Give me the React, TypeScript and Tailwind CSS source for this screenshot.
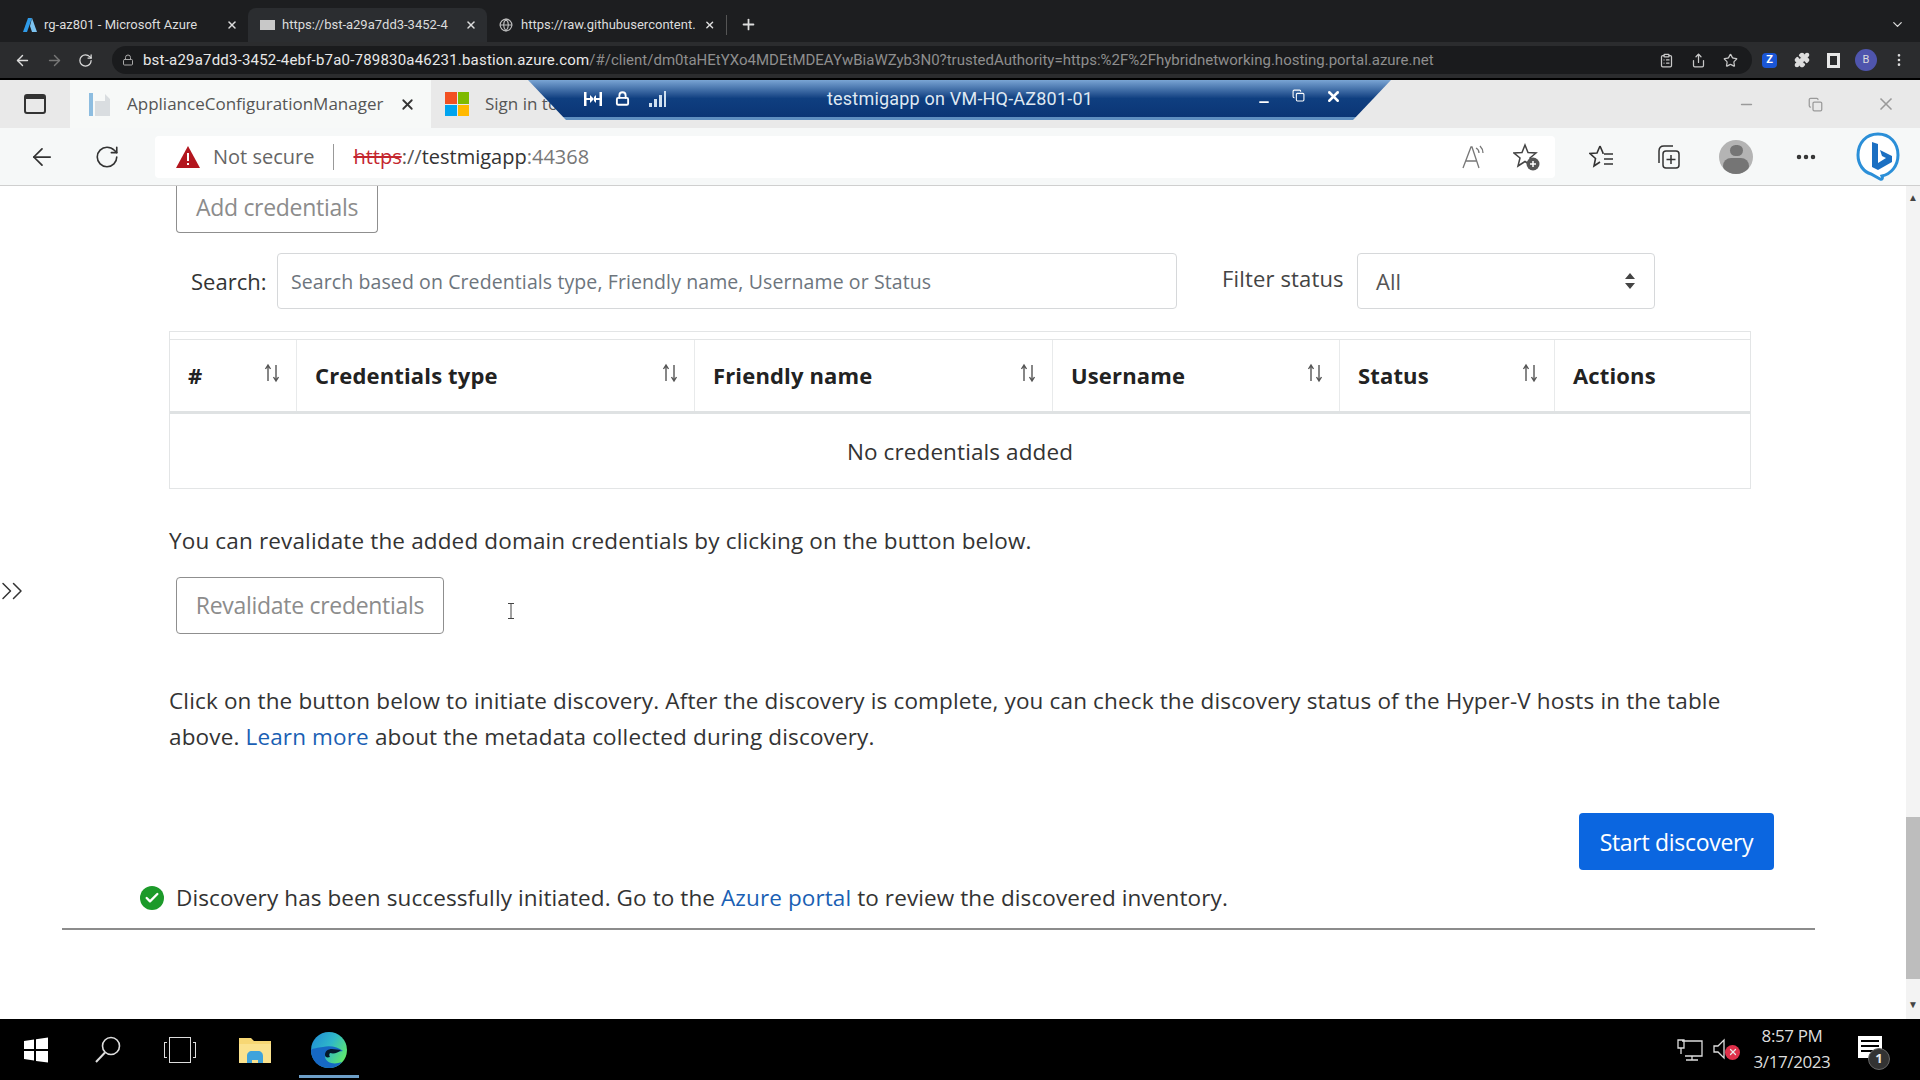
import { ArrowLeft, ArrowRight, RotateCw, Lock, Star, Share, Puzzle, Plus, X, Globe, ChevronDown, MoreVertical, MoreHorizontal, ClipboardList, Copy, Minus, ChevronsRight, Check } from 'lucide-react'

function SortIcon() {
  return (
    <svg width="22" height="22" viewBox="0 0 22 22" fill="none" stroke="#555" strokeWidth="1.4" aria-hidden="true" className="-mt-[6px]">
      <path d="M7 19V4M4.500 7L7 3l2.500 4" />
      <path d="M15 3v15M12.500 15l2.500 4 2.500-4" />
    </svg>
  )
}

function AzureLogo() {
  return (
    <svg width="16" height="16" viewBox="0 0 16 16" aria-hidden="true">
      <path d="M6 1h4L5 15H1z" fill="#2f9be8" />
      <path d="M10 1l5 14h-5L8 9z" fill="#7cc3f0" />
    </svg>
  )
}

function MsLogo() {
  return (
    <div className="grid grid-cols-2 gap-[1px] w-[24px] h-[24px]">
      <div className="bg-[#f25022]" />
      <div className="bg-[#7fba00]" />
      <div className="bg-[#00a4ef]" />
      <div className="bg-[#ffb900]" />
    </div>
  )
}

function BingIcon() {
  return (
    <svg width="46" height="50" viewBox="0 0 46 50" fill="none" aria-hidden="true">
      <path d="M23 3C11 3 3 12 3 24c0 10 6 17 13 19l9 5c2 1 3-1 2-3 9-2 16-10 16-21C43 12 35 3 23 3z" stroke="#2b8fd8" strokeWidth="3" fill="#fff" />
      <path d="M17 11l6 2v19l8-5-4-2-2-6 12 6v6l-14 8-6-3z" fill="#1b6fc2" />
    </svg>
  )
}

function ReadAloudIcon() {
  return (
    <svg width="26" height="26" viewBox="0 0 26 26" fill="none" stroke="#777" strokeWidth="1.300" aria-hidden="true">
      <path d="M2 24L10 3h1l7 21M5 17h11" />
      <path d="M15 4c2 1 3 3 3 5M19 2c2 2 3 4 3 7" />
    </svg>
  )
}

function StarPlusIcon() {
  return (
    <svg width="28" height="28" viewBox="0 0 28 28" fill="none" stroke="#444" strokeWidth="1.500" aria-hidden="true">
      <path d="M12 2l3 7.500 8 .5-6 5 2 8-7-4.500L5 23l2-8-6-5 8-.5z" />
      <circle cx="20" cy="21" r="6.500" fill="#555" stroke="none" />
      <path d="M20 18v6M17 21h6" stroke="#fff" />
    </svg>
  )
}

function FavoritesIcon() {
  return (
    <svg width="26" height="26" viewBox="0 0 26 26" fill="none" stroke="#333" strokeWidth="1.600" aria-hidden="true">
      <path d="M11 2l3 7h-1M11 2L8 9l-7 .5 5.500 5L5 22l6-4" />
      <path d="M15 10h9M15 15h9M15 20h9" />
    </svg>
  )
}

function CollectionsIcon() {
  return (
    <svg width="26" height="26" viewBox="0 0 26 26" fill="none" stroke="#333" strokeWidth="1.500" aria-hidden="true">
      <path d="M4 19V7c0-3 2-5 5-5h9" />
      <rect x="8" y="7" width="16" height="17" rx="3" />
      <path d="M16 11v9M11.500 15.500h9" />
    </svg>
  )
}

function AvatarIcon() {
  return (
    <div className="w-[34px] h-[34px] rounded-full bg-[#b4b4b4] overflow-hidden flex flex-col items-center">
      <div className="mt-[5px] w-[13px] h-[13px] rounded-full bg-[#757575]" />
      <div className="mt-[2px] w-[26px] h-[18px] rounded-full bg-[#757575]" />
    </div>
  )
}

function BastionFitIcon() {
  return (
    <svg width="20" height="16" viewBox="0 0 20 16" fill="#fff" aria-hidden="true">
      <path d="M1 1h2.500v14H1zM16.500 1H19v14h-2.500zM3.500 7H7V4l4 4-4 4V9H3.500zM16.500 9H13v3l-2-2V6l2-2v3h3.500z" />
    </svg>
  )
}

function WindowsLogo() {
  return (
    <svg width="26" height="26" viewBox="0 0 26 26" fill="#fff" aria-hidden="true">
      <path d="M1 4l10-1.500V12H1zM13 2.200L25 .5V12H13zM1 14h10v9.500L1 22zM13 14h12v11.500L13 24z" />
    </svg>
  )
}

function SearchGlass() {
  return (
    <svg width="28" height="28" viewBox="0 0 28 28" fill="none" stroke="#ddd" strokeWidth="1.600" aria-hidden="true">
      <circle cx="17" cy="10" r="8.500" />
      <path d="M11 16.500L2 26" strokeWidth="2" />
    </svg>
  )
}

function FolderIcon() {
  return (
    <svg width="34" height="28" viewBox="0 0 34 28" aria-hidden="true">
      <path d="M1 2h12l3 3h17v22H1z" fill="#f7d774" />
      <path d="M1 8h32v19H1z" fill="#fbe28e" />
      <path d="M9 27v-7c0-3 2-5 5-5h6c3 0 5 2 5 5v7h-5v-3h-6v3z" fill="#3fa3dc" />
    </svg>
  )
}

function EdgeLogo() {
  return (
    <svg width="38" height="38" viewBox="0 0 38 38" aria-hidden="true">
      <defs>
        <linearGradient id="edgeTop" x1="0" y1="0" x2="1" y2="0.600">
          <stop offset="0" stopColor="#1e88d8" />
          <stop offset="0.550" stopColor="#2fb8c8" />
          <stop offset="1" stopColor="#5ee66e" />
        </linearGradient>
      </defs>
      <circle cx="19" cy="19" r="18" fill="url(#edgeTop)" />
      <path d="M1 19c0 11 8 18 18 18 5 0 10-2 13-6-8 3-16 1-17-5-.5-4 2-6 6-6 4 0 9 1 12 0-5-4-13-6-20-4-5 1-10 1-12 3z" fill="#1668c4" />
      <path d="M15 24c0-4 3-6 7-6 3 0 6 1 9 1-3 3-7 4-11 3-1 1-1 3 0 4-3 1-5 0-5-2z" fill="#04182c" />
    </svg>
  )
}

const columns = [
  { label: '#', width: 'w-[127px]', sort: true },
  { label: 'Credentials type', width: 'w-[398px]', sort: true },
  { label: 'Friendly name', width: 'w-[358px]', sort: true },
  { label: 'Username', width: 'w-[287px]', sort: true },
  { label: 'Status', width: 'w-[215px]', sort: true },
  { label: 'Actions', width: 'flex-1', sort: false },
]

function ChromeBar() {
  return (
    <div className="font-['Roboto',sans-serif] text-[13px]">
      <div className="h-[42px] bg-[#1d1e20] flex items-end text-[#dcdcdc]">
        <div className="w-[18px]" />
        <div className="w-[230px] h-[34px] flex items-center px-[2px] gap-[6px]">
          <div className="ml-[2px]"><AzureLogo /></div>
          <span className="flex-1 whitespace-nowrap">rg-az801 - Microsoft Azure</span>
          <X size={12} strokeWidth={3} className="mr-[8px]" />
        </div>
        <div className="w-[239px] h-[34px] bg-[#2b2d30] rounded-t-lg flex items-center pl-[12px] pr-[10px] gap-[7px]">
          <div className="w-[15px] h-[10px] bg-[#c8c8c8] shrink-0" />
          <span className="flex-1 whitespace-nowrap">https://bst-a29a7dd3-3452-4</span>
          <X size={12} strokeWidth={3} />
        </div>
        <div className="w-[239px] h-[34px] flex items-center pl-[12px] pr-[11px] gap-[8px]">
          <Globe size={14} className="shrink-0 text-[#bbb]" />
          <span className="flex-1 whitespace-nowrap">https://raw.githubusercontent.</span>
          <X size={12} strokeWidth={3} />
        </div>
        <div className="w-[1px] h-[20px] mb-[7px] bg-[#555]" />
        <Plus size={17} strokeWidth={2.5} className="ml-[13px] mb-[9px]" />
        <ChevronDown size={15} className="ml-auto mr-[15px] mb-[10px]" />
      </div>
      <div className="h-[36px] bg-[#2b2c2e] flex items-center text-[#dcdcdc]">
        <div className="w-[112px] flex items-center pl-[14px] gap-[15px]">
          <ArrowLeft size={17} />
          <ArrowRight size={17} className="text-[#777]" />
          <RotateCw size={15} />
        </div>
        <div className="w-[1640px] h-[28px] bg-[#1a1b1d] rounded-full flex items-center pl-[10px] pr-[14px] text-[15px] whitespace-nowrap">
          <Lock size={12} className="text-[#aaa] mr-[9px] shrink-0" />
          <span className="text-[#e8e8e8] tracking-[0.2px]">bst-a29a7dd3-3452-4ebf-b7a0-789830a46231.bastion.azure.com</span>
          <span className="text-[#8e8e8e]">/#/client/dm0taHEtYXo4MDEtMDEAYwBiaWZyb3N0?trustedAuthority=https:%2F%2Fhybridnetworking.hosting.portal.azure.net</span>
          <div className="ml-auto flex items-center gap-[17px] text-[#c8c8c8] shrink-0">
            <ClipboardList size={15} />
            <Share size={15} />
            <Star size={15} />
          </div>
        </div>
        <div className="flex items-center pl-[10px] gap-[17px]">
          <div className="w-[15px] h-[15px] rounded-[4px] bg-[#1a56d6] text-white text-[11px] font-bold flex items-center justify-center">Z</div>
          <Puzzle size={16} fill="#ddd" className="text-[#ddd]" />
          <div className="w-[13px] h-[15px] border-[3px] border-[#e8e8e8]" />
          <div className="w-[22px] h-[22px] -ml-[2px] rounded-full bg-[#4f55ad] text-[11px] flex items-center justify-center">B</div>
          <MoreVertical size={16} className="-ml-[3px]" />
        </div>
      </div>
      <div className="h-[2px] bg-black" />
    </div>
  )
}

function EdgeBar() {
  return (
    <div className="font-['Open_Sans',sans-serif] shrink-0">
      <div className="h-[48px] bg-[#e9e9e9] flex items-stretch text-[#555]">
        <div className="w-[70px] flex items-center justify-center">
          <div className="w-[22px] h-[20px] border-2 border-[#333] rounded-[3px] border-t-[5px]" />
        </div>
        <div className="w-[361px] bg-[#f7f9f8] flex items-center pl-[18px] pr-[15px] gap-[15px]">
          <svg width="24" height="26" viewBox="0 0 24 26" aria-hidden="true">
            <path d="M1 2h4v23H1z" fill="#8dbde0" />
            <path d="M7 10h10V3l5 5v17H7z" fill="#d9dde0" />
          </svg>
          <span className="flex-1 text-[17px] whitespace-nowrap">ApplianceConfigurationManager</span>
          <X size={17} strokeWidth={2.5} className="text-[#333]" />
        </div>
        <div className="flex items-center pl-[14px] gap-[16px]">
          <MsLogo />
          <span className="text-[17px]">Sign in to</span>
        </div>
        <div className="ml-auto flex items-center gap-[53px] pr-[24px] text-[#9a9a9a]">
          <Minus size={17} />
          <Copy size={15} />
          <X size={20} />
        </div>
      </div>
      <div className="h-[58px] bg-[#f6f8f8] border-b border-[#cfcfcf] flex items-center">
        <div className="w-[155px] flex items-center pl-[28px] gap-[38px] text-[#333]">
          <ArrowLeft size={28} strokeWidth={1.5} />
          <RotateCw size={26} strokeWidth={1.5} />
        </div>
        <div className="w-[1400px] h-[42px] bg-white rounded-[4px] flex items-center pl-[20px] pr-[14px] text-[20px]">
          <svg width="26" height="24" viewBox="0 0 26 24" aria-hidden="true">
            <path d="M13 1l12 22H1z" fill="#b3161e" />
            <path d="M12 8h2v8h-2zM12 18h2v2h-2z" fill="#fff" />
          </svg>
          <span className="ml-[12px] text-[#666]">Not secure</span>
          <div className="w-[1px] h-[26px] bg-[#999] mx-[19px]" />
          <span className="text-[#c4262e] line-through">https</span>
          <span className="text-[#555]">://</span>
          <span className="text-[#333]">testmigapp</span>
          <span className="text-[#777]">:44368</span>
          <div className="ml-auto"><ReadAloudIcon /></div>
          <div className="ml-[26px]"><StarPlusIcon /></div>
        </div>
        <div className="ml-[34px]"><FavoritesIcon /></div>
        <div className="ml-[40px]"><CollectionsIcon /></div>
        <div className="ml-[38px]"><AvatarIcon /></div>
        <MoreHorizontal size={24} strokeWidth={2.5} className="ml-[41px] text-[#333]" />
        <div className="ml-auto mr-[19px] -mt-[2px]"><BingIcon /></div>
      </div>
    </div>
  )
}

function BastionBar() {
  return (
    <div className="absolute left-[528px] top-[80px] w-[863px] h-[40px] bg-gradient-to-b from-[#7aa5d4] via-[#0f3f80] to-[#0b3575] border-b-[3px] border-[#5f8fc0] [clip-path:polygon(0_0,100%_0,95.6%_100%,4.4%_100%)] text-white font-['Roboto',sans-serif]">
      <div className="flex items-center h-full pl-[55px]">
        <BastionFitIcon />
        <Lock size={15} strokeWidth={3} className="ml-[12px]" />
        <svg width="18" height="16" viewBox="0 0 18 16" fill="#cfe0f0" className="ml-[18px]" aria-hidden="true">
          <path d="M1 12h3v4H1zM6 8h3v8H6zM11 4h3v12h-3zM16 0h2v16h-2z" />
        </svg>
        <span className="ml-[161px] text-[18px] text-[#dfe8f2] whitespace-nowrap tracking-[0.2px]">testmigapp on VM-HQ-AZ801-01</span>
        <Minus size={14} strokeWidth={3} className="ml-[164px] mt-[6px]" />
        <Copy size={13} strokeWidth={2} className="ml-[21px] -mt-[6px]" />
        <X size={17} strokeWidth={3.5} className="ml-[20px] -mt-[4px]" />
      </div>
    </div>
  )
}

function MainContent() {
  return (
    <div className="flex-1 flex min-h-0 bg-white font-['Open_Sans',sans-serif] text-[#333] relative">
      <div className="flex-1 min-w-0 flex flex-col">
        <div className="ml-[176px] w-[202px] h-[47px] pb-[4px] border border-t-0 border-[#8f8f8f] rounded-b-[4px] flex items-center justify-center text-[23px] text-[#8c8c8c] tracking-[-0.3px]">
          Add credentials
        </div>

        <div className="mt-[20px] flex h-[56px] ml-[191px]">
          <span className="w-[86px] text-[22px] leading-[56px] text-[#333]">Search:</span>
          <div className="w-[900px] pt-[2px] border border-[#d6d8da] rounded-[4px] flex items-center pl-[13px] text-[19.5px] text-[#6d757d] tracking-[0.1px] whitespace-nowrap">
            Search based on Credentials type, Friendly name, Username or Status
          </div>
          <span className="ml-[45px] w-[135px] text-[22px] leading-[50px] text-[#444] tracking-[0.15px] whitespace-nowrap">Filter status</span>
          <div className="w-[298px] border border-[#d6d8da] rounded-[4px] flex items-center pl-[18px] pr-[18px] text-[22px] text-[#555]">
            All
            <svg width="12" height="18" viewBox="0 0 12 18" fill="#444" className="ml-auto" aria-hidden="true">
              <path d="M6 1l5 6H1zM6 17l-5-6h10z" />
            </svg>
          </div>
        </div>

        <div className="mt-[22px] ml-[169px] w-[1582px] border border-[#e3e5e6]">
          <div className="mt-[7px] border-t border-b-[3px] border-t-[#e3e5e6] border-b-[#dfe2e3] h-[75px] flex">
            {columns.map((col) => (
              <div key={col.label} className={`${col.width} border-r last:border-r-0 border-[#e8eaeb] flex items-center pl-[18px] pr-[13px] justify-between`}>
                <span className="text-[22px] font-bold text-[#222] tracking-[0.15px]">{col.label}</span>
                {col.sort && <SortIcon />}
              </div>
            ))}
          </div>
          <div className="h-[74px] pt-[2px] flex items-center justify-center text-[22.5px] text-[#333] tracking-[0.1px]">
            No credentials added
          </div>
        </div>

        <p className="mt-[36px] ml-[169px] text-[22.5px] leading-[32px] tracking-[0.15px]">
          You can revalidate the added domain credentials by clicking on the button below.
        </p>

        <div className="mt-[20px] ml-[176px] w-[268px] h-[57px] border border-[#8f8f8f] rounded-[4px] flex items-center justify-center text-[23px] text-[#8c8c8c] tracking-[-0.3px]">
          Revalidate credentials
        </div>

        <p className="mt-[49px] ml-[169px] w-[1570px] text-[22.5px] leading-[36px] tracking-[0.15px]">
          Click on the button below to initiate discovery. After the discovery is complete, you can check the discovery status of the Hyper-V hosts in the table above. <span className="text-[#1a5fb4]">Learn more</span> about the metadata collected during discovery.
        </p>

        <div className="mt-[58px] ml-[1579px] w-[195px] h-[57px] pt-[2px] rounded-[4px] bg-[#0b66e0] text-white text-[23px] flex items-center justify-center tracking-[-0.3px]">
          Start discovery
        </div>

        <div className="mt-[10px] ml-[140px] h-[36px] flex items-center text-[22.5px] tracking-[0.1px] whitespace-nowrap">
          <div className="w-[24px] h-[24px] rounded-full bg-[#1c9a2a] flex items-center justify-center text-white mr-[12px]">
            <Check size={16} strokeWidth={3.5} />
          </div>
          Discovery has been successfully initiated. Go to the&nbsp;<span className="text-[#1a5fb4]">Azure portal</span>&nbsp;to review the discovered inventory.
        </div>

        <div className="mt-[12px] ml-[62px] w-[1753px] border-t-2 border-[#8c8c8c]" />
      </div>

      <div className="w-[14px] bg-[#f3f3f3] flex flex-col items-center text-[#444] text-[10px] leading-none">
        <span className="pt-[6px]">▲</span>
        <div className="mt-auto w-full h-[162px] bg-[#bdbdbd]" />
        <span className="mt-[20px] pb-[10px]">▼</span>
      </div>

      <ChevronsRight size={36} strokeWidth={1} className="absolute left-[-6px] top-[387px] text-[#333]" />
      <svg width="8" height="16" viewBox="0 0 8 16" fill="none" stroke="#444" strokeWidth="1" className="absolute left-[507px] top-[417px]" aria-hidden="true">
        <path d="M1 .5h6M4 .5v15M1 15.500h6" />
      </svg>
    </div>
  )
}

function Taskbar() {
  return (
    <div className="h-[61px] shrink-0 bg-black flex items-center text-white font-['Open_Sans',sans-serif]">
      <div className="ml-[23px]"><WindowsLogo /></div>
      <div className="ml-[45px]"><SearchGlass /></div>
      <div className="ml-[42px] flex items-center gap-[2px] text-[#ddd]">
        <div className="w-[3px] h-[16px] border-l border-y border-[#ddd]" />
        <div className="w-[22px] h-[26px] border border-[#ddd]" />
        <div className="w-[3px] h-[16px] border-r border-y border-[#ddd]" />
      </div>
      <div className="ml-[42px]"><FolderIcon /></div>
      <div className="ml-[27px] relative w-[60px] h-[61px] flex items-center justify-center">
        <EdgeLogo />
        <div className="absolute left-0 right-0 bottom-[2px] h-[3px] bg-[#6d9fc8]" />
      </div>
      <div className="ml-auto flex items-center text-[#e8e8e8]">
        <svg width="26" height="24" viewBox="0 0 26 24" fill="none" stroke="#ddd" strokeWidth="1.3" aria-hidden="true">
          <path d="M5 3h20v15H8M15 18v4M9 22h12M1 2h6v8H1zM4 10v6" />
        </svg>
        <div className="relative ml-[9px] w-[28px] h-[24px]">
          <svg width="18" height="24" viewBox="0 0 18 24" fill="none" stroke="#ddd" strokeWidth="1.3" aria-hidden="true">
            <path d="M2 8h4l6-6v18l-6-6H2z" />
          </svg>
          <div className="absolute right-0 bottom-[2px] w-[15px] h-[15px] rounded-full bg-[#e0304a] flex items-center justify-center">
            <X size={10} strokeWidth={3} />
          </div>
        </div>
        <div className="ml-[7px] w-[90px] text-center text-[17px] leading-[26px] text-[#ddd] tracking-[-0.4px] -mt-[2px]">
          <div>8:57 PM</div>
          <div>3/17/2023</div>
        </div>
        <div className="relative ml-[21px] mr-[34px] w-[28px] h-[28px]">
          <div className="w-[24px] h-[22px] bg-white flex flex-col gap-[3px] px-[3px] pt-[4px]">
            <div className="h-[2px] bg-black" />
            <div className="h-[2px] bg-black" />
            <div className="h-[2px] bg-black" />
          </div>
          <div className="absolute -right-[4px] -bottom-[6px] w-[22px] h-[22px] rounded-full bg-[#333] border border-[#666] flex items-center justify-center text-[13px] font-bold">1</div>
        </div>
      </div>
    </div>
  )
}

export default function App() {
  return (
    <div className="relative w-[1920px] h-[1080px] flex flex-col overflow-hidden bg-white">
      <ChromeBar />
      <EdgeBar />
      <MainContent />
      <Taskbar />
      <BastionBar />
    </div>
  )
}
